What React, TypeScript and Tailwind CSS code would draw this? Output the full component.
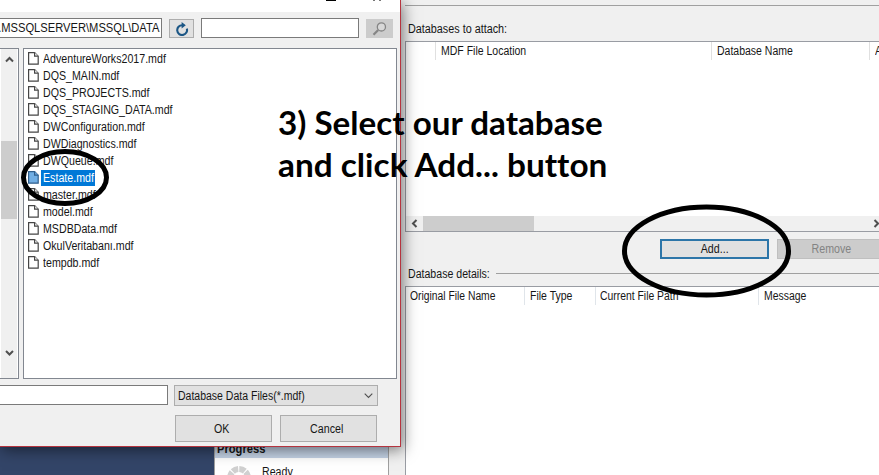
import type { ReactNode } from 'react';

const files = [
  'AdventureWorks2017.mdf', 'DQS_MAIN.mdf', 'DQS_PROJECTS.mdf', 'DQS_STAGING_DATA.mdf',
  'DWConfiguration.mdf', 'DWDiagnostics.mdf', 'DWQueue.mdf', 'Estate.mdf', 'master.mdf',
  'model.mdf', 'MSDBData.mdf', 'OkulVeritabanı.mdf', 'tempdb.mdf',
];

function Label({ children, className = 'origin-left scale-x-[0.887]' }: { children: ReactNode; className?: string }) {
  return <span className={`inline-block whitespace-nowrap ${className}`}>{children}</span>;
}

function Chevron({ d, size = 'h-[9px] w-[9px]', thin = false }: { d: string; size?: string; thin?: boolean }) {
  return (
    <svg className={`shrink-0 ${size}`} viewBox="0 0 9 9" fill="none" stroke="#505050" strokeWidth={thin ? 1.1 : 2}>
      <path d={d} />
    </svg>
  );
}

function FileIcon({ selected }: { selected: boolean }) {
  return (
    <svg className="h-[13px] w-[11px] shrink-0" viewBox="0 0 11 13" fill={selected ? '#72afe4' : '#fff'} stroke={selected ? '#315f8c' : '#454545'} strokeWidth="1.2">
      <path d="M.6.6h6l3.6 3.6v8H.6z" />
      <path d="M6.6.6v3.6h3.6" />
    </svg>
  );
}

function Dialog() {
  return (
    <div className="absolute left-0 top-0 flex h-[447px] w-[401px] flex-col border-b border-r border-[#b5343f] bg-[#f0f0f0] shadow-[2px_3px_14px_rgba(0,0,0,0.5)]">
      <div className="flex h-3 shrink-0 bg-white">
        <div className="ml-[326px] h-px w-[10px] bg-black" />
        <div className="ml-[37px] h-px w-[2px] bg-[#777]" />
        <div className="ml-[4px] h-px w-[2px] bg-[#777]" />
      </div>
      <div className="flex h-9 shrink-0 pt-[6px]">
        <div className="flex h-5 w-[162px] items-center justify-end overflow-hidden border border-l-0 border-[#7a7a7a] bg-white pr-[2px]">
          <Label className="origin-right scale-x-[0.93]">.MSSQLSERVER\MSSQL\DATA</Label>
        </div>
        <div className="ml-[7px] mt-px flex h-[19px] w-[25px] items-center justify-center border border-[#adadad] bg-[#e1e1e1]">
          <svg className="h-[14px] w-[14px]" viewBox="0 0 14 14" fill="none">
            <path d="M11.8 6.6a4.9 4.9 0 1 1-4.6-3.4" stroke="#1b5685" strokeWidth="2.1" />
            <path d="M6.6 0v6.4L10.8 3.2z" fill="#1b5685" />
          </svg>
        </div>
        <div className="ml-[7px] h-5 w-[158px] border border-[#7a7a7a] bg-white" />
        <div className="ml-[7px] mt-px flex h-[19px] w-[27px] items-center justify-center bg-[#cccccc]">
          <svg className="h-[14px] w-[15px]" viewBox="0 0 15 14" fill="none" stroke="#858585">
            <circle cx="9.4" cy="4.9" r="4.1" strokeWidth="1.3" fill="#d8d8d8" />
            <path d="M6.2 8 1.5 12.7" strokeWidth="2.2" />
          </svg>
        </div>
      </div>
      <div className="flex h-[331px] shrink-0">
        <div className="flex w-[19px] border-y border-r border-[#828790] bg-white pl-px pr-px">
          <div className="flex w-4 flex-col items-center bg-[#f0f0f0]">
            <div className="mt-[5px] flex h-[10px] items-center"><Chevron d="M1 6.5 4.5 3 8 6.5" /></div>
            <div className="mt-[77px] h-[78px] w-full bg-[#cdcdcd]" />
            <div className="mt-[128px] flex h-[10px] items-center"><Chevron d="M1 3 4.5 6.5 8 3" /></div>
          </div>
        </div>
        <div className="ml-1 w-[374px] border border-[#828790] bg-white pt-px">
          {files.map((f) => {
            const selected = f === 'Estate.mdf';
            return (
              <div key={f} className="flex h-[17px] items-center pl-1">
                <FileIcon selected={selected} />
                <div className={`ml-[2px] flex h-4 items-center pl-[2px] ${selected ? 'w-[54px] bg-[#0078d7] text-white' : ''}`}>
                  <Label>{f}</Label>
                </div>
              </div>
            );
          })}
        </div>
      </div>
      <div className="mt-[6px] flex h-[21px] shrink-0">
        <div className="h-5 w-[168px] border border-l-0 border-[#7a7a7a] bg-white" />
        <div className="ml-[6px] flex w-[204px] items-center justify-between border border-[#adadad] bg-[#e1e1e1] pl-[3px] pr-1">
          <Label className="origin-left scale-x-[0.875]">Database Data Files(*.mdf)</Label>
          <Chevron d="M.7 2.7 4.5 6.5 8.3 2.7" thin />
        </div>
      </div>
      <div className="mt-[9px] flex h-[27px] shrink-0 gap-2 pl-[175px]">
        <div className="flex w-[97px] items-center justify-center border border-[#adadad] bg-[#e1e1e1] pr-[3px]"><Label className="origin-center scale-x-[0.887]">OK</Label></div>
        <div className="flex w-[97px] items-center justify-center border border-[#adadad] bg-[#e1e1e1] pr-[3px]"><Label className="origin-center scale-x-[0.887]">Cancel</Label></div>
      </div>
    </div>
  );
}

function ProgressArea() {
  return (
    <div className="flex w-[405px] shrink-0 flex-col justify-end">
      <div className="flex h-[35px]">
        <div className="w-[214px] bg-[#334568]" />
        <div className="w-[175px] border-x border-[#a0a0a0] bg-white">
          <div className="flex h-[18px] items-center bg-[#c5d3e6] pl-[2px] font-bold">
            <Label className="origin-left scale-x-[0.93]">Progress</Label>
          </div>
          <div className="flex pl-3">
            <svg className="mt-[8px] h-6 w-6" viewBox="0 0 24 24" fill="none">
              <circle cx="12" cy="12" r="9" stroke="#d0d0d0" strokeWidth="6" strokeDasharray="6 1.07" />
            </svg>
            <div className="ml-[11px] mt-[7px]"><Label>Ready</Label></div>
          </div>
        </div>
      </div>
    </div>
  );
}

function AttachPane() {
  return (
    <div className="flex min-w-0 flex-1 flex-col">
      <div className="h-[6px] shrink-0 border-b border-[#a0a0a0]" />
      <div className="flex h-[35px] shrink-0 pl-[3px] pt-4"><Label className="origin-left scale-x-[0.9]">Databases to attach:</Label></div>
      <div className="flex h-[191px] shrink-0 flex-col border-y border-l border-[#999ca3] bg-white">
        <div className="flex h-[18px] items-center">
          <div className="h-full w-[29px]" />
          <div className="flex h-full w-[276px] items-center border-l border-[#e0e0e0] pl-[5px]"><Label className="origin-left scale-x-[0.875]">MDF File Location</Label></div>
          <div className="flex h-full w-[158px] items-center border-l border-[#e0e0e0] pl-[5px]"><Label className="origin-left scale-x-[0.875]">Database Name</Label></div>
          <div className="flex h-full flex-1 items-center overflow-hidden border-l border-[#e0e0e0] pl-[5px]"><Label>A</Label></div>
        </div>
        <div className="mt-auto flex h-[15px] items-center overflow-hidden bg-[#f0f0f0]">
          <div className="flex w-[17px] shrink-0 items-center justify-center"><Chevron d="M6.5 1 3 4.5 6.5 8" /></div>
          <div className="h-full w-[111px] shrink-0 bg-[#cdcdcd]" />
          <div className="ml-[338px] flex shrink-0"><Chevron d="M2.5 1 6 4.5 2.5 8" /></div>
        </div>
      </div>
      <div className="flex h-[36px] shrink-0 pl-[255px] pt-[6px]">
        <div className="mt-px flex h-[20px] w-[109px] shrink-0 items-center justify-center border-2 border-[#2c75a8] bg-[#e1e1e1]"><Label className="origin-center scale-x-[0.887]">Add...</Label></div>
        <div className="ml-2 mt-px flex h-[20px] w-[108px] shrink-0 items-center justify-center border border-[#bfbfbf] bg-[#cccccc] text-[#838383]"><Label className="origin-center scale-x-[0.887]">Remove</Label></div>
      </div>
      <div className="flex h-[18px] shrink-0 items-start pl-[3px]">
        <div className="-mt-px w-[88px]"><Label className="origin-left scale-x-[0.882]">Database details:</Label></div>
        <div className="mt-[5px] h-px flex-1 bg-[#a0a0a0]" />
      </div>
      <div className="flex flex-1 items-start border-l border-t border-[#999ca3] bg-white">
        <div className="flex h-[18px] w-[118px] items-center pl-1"><Label className="origin-left scale-x-[0.86]">Original File Name</Label></div>
        <div className="flex h-[18px] w-[71px] items-center border-l border-[#e0e5ea] pl-[5px]"><Label className="origin-left scale-x-[0.875]">File Type</Label></div>
        <div className="flex h-[18px] w-[163px] items-center border-l border-[#e0e5ea] pl-1"><Label className="origin-left scale-x-[0.865]">Current File Path</Label></div>
        <div className="flex h-[18px] items-center border-l border-[#e0e5ea] pl-[5px]"><Label className="origin-left scale-x-[0.87]">Message</Label></div>
      </div>
    </div>
  );
}

export default function App() {
  return (
    <div className="relative flex h-[475px] w-[879px] overflow-hidden bg-[#f0f0f0] font-['Liberation_Sans',sans-serif] text-[12px] leading-[14px] text-[#161616]">
      <ProgressArea />
      <AttachPane />
      <Dialog />
      <div className="absolute left-[278px] top-[102px] font-['Lato',sans-serif] text-[32px] font-bold leading-[42px] text-black [font-variant-ligatures:none]">
        <div className="origin-left scale-x-[1.037] whitespace-nowrap">3) Select our database</div>
        <div className="origin-left scale-x-[1.042] whitespace-nowrap">and click Add... button</div>
      </div>
      <svg className="pointer-events-none absolute inset-0 h-full w-full" viewBox="0 0 879 475" fill="none" stroke="#000" strokeWidth="5">
        <ellipse cx="65" cy="177.5" rx="41.5" ry="26" />
        <ellipse cx="706.5" cy="251" rx="82" ry="44" />
      </svg>
    </div>
  );
}
